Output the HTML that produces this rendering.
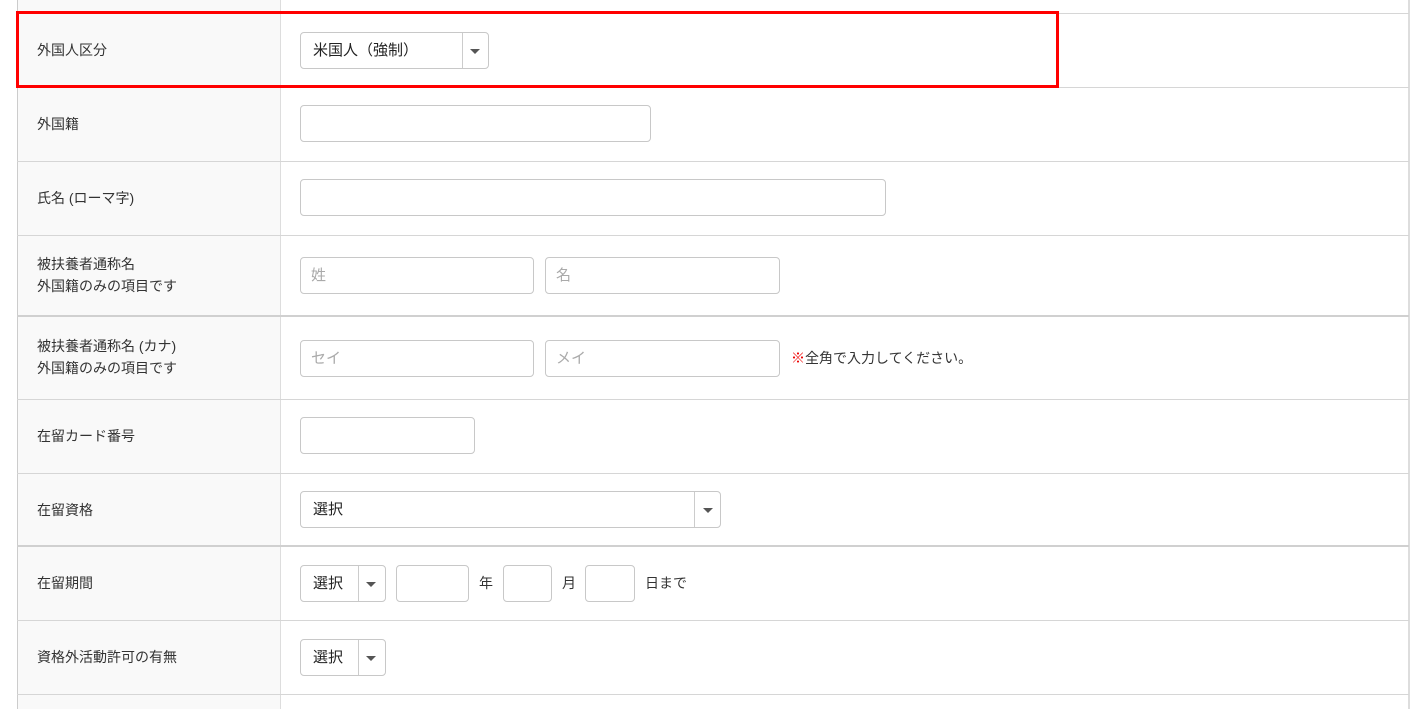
<!DOCTYPE html>
<html><head><meta charset="utf-8"><style>
*{box-sizing:border-box;margin:0;padding:0}
body{width:1424px;height:709px;background:#fff;position:relative;overflow:hidden;font-family:"Liberation Sans","Noto Sans CJK JP",sans-serif;color:#333}
.lab{position:absolute;left:17px;width:264px;background:#f9f9f9;border-left:1px solid #ccc;border-right:1px solid #ddd}
.line{position:absolute;left:17px;width:1392px;height:1px;background:#d6d6d6}
.line.d{height:2px;background:#d0d0d0}
.t{position:absolute;left:37px;font-size:14px;line-height:22px;color:#333}
.in{position:absolute;height:37px;border:1px solid #c8c8c8;border-radius:4px;background:#fff;font-size:15px;color:#aaa;padding:0 10px;line-height:35px}
.sel{position:absolute;height:37px;border:1px solid #c8c8c8;border-radius:4px;background:#fff;font-size:15px;color:#222;padding:0 12px;line-height:35px}
.sel .dv{position:absolute;top:0;bottom:0;width:1px;background:#ccc}
.sel .ar{position:absolute;top:16px;width:0;height:0;border-left:5px solid transparent;border-right:5px solid transparent;border-top:5px solid #555}
.x{position:absolute;font-size:14px;color:#333;line-height:20px}
</style></head><body>
<div class="lab" style="top:0;height:709px"></div>
<div style="position:absolute;left:1408px;top:0;width:2px;height:709px;background:#ddd"></div>
<div class="line" style="top:13px"></div>
<div class="line" style="top:87px"></div>
<div class="line" style="top:161px"></div>
<div class="line" style="top:235px"></div>
<div class="line d" style="top:315px"></div>
<div class="line" style="top:399px"></div>
<div class="line" style="top:473px"></div>
<div class="line d" style="top:545px"></div>
<div class="line" style="top:620px"></div>
<div class="line" style="top:694px"></div>

<div class="t" style="top:39px">外国人区分</div>
<div class="t" style="top:113px">外国籍</div>
<div class="t" style="top:187px">氏名 (ローマ字)</div>
<div class="t" style="top:253px">被扶養者通称名<br>外国籍のみの項目です</div>
<div class="t" style="top:335px">被扶養者通称名 (カナ)<br>外国籍のみの項目です</div>
<div class="t" style="top:425px">在留カード番号</div>
<div class="t" style="top:499px">在留資格</div>
<div class="t" style="top:572px">在留期間</div>
<div class="t" style="top:646px">資格外活動許可の有無</div>

<div class="sel" style="left:300px;top:32px;width:189px">米国人（強制）<div class="dv" style="left:161px"></div><div class="ar" style="left:169px"></div></div>
<div class="in" style="left:300px;top:105px;width:351px"></div>
<div class="in" style="left:300px;top:179px;width:586px"></div>
<div class="in" style="left:300px;top:257px;width:234px">姓</div>
<div class="in" style="left:545px;top:257px;width:235px">名</div>
<div class="in" style="left:300px;top:340px;width:234px">セイ</div>
<div class="in" style="left:545px;top:340px;width:235px">メイ</div>
<div class="x" style="left:791px;top:348px"><span style="color:#e00">※</span>全角で入力してください。</div>
<div class="in" style="left:300px;top:417px;width:175px"></div>
<div class="sel" style="left:300px;top:491px;width:421px">選択<div class="dv" style="left:393px"></div><div class="ar" style="left:402px"></div></div>
<div class="sel" style="left:300px;top:565px;width:86px">選択<div class="dv" style="left:57px"></div><div class="ar" style="left:65px"></div></div>
<div class="in" style="left:396px;top:565px;width:73px"></div>
<div class="x" style="left:479px;top:573px">年</div>
<div class="in" style="left:503px;top:565px;width:49px"></div>
<div class="x" style="left:562px;top:573px">月</div>
<div class="in" style="left:585px;top:565px;width:50px"></div>
<div class="x" style="left:645px;top:573px">日まで</div>
<div class="sel" style="left:300px;top:639px;width:86px">選択<div class="dv" style="left:57px"></div><div class="ar" style="left:65px"></div></div>

<div style="position:absolute;left:16px;top:11px;width:1043px;height:77px;border:3px solid #f00"></div>
</body></html>
